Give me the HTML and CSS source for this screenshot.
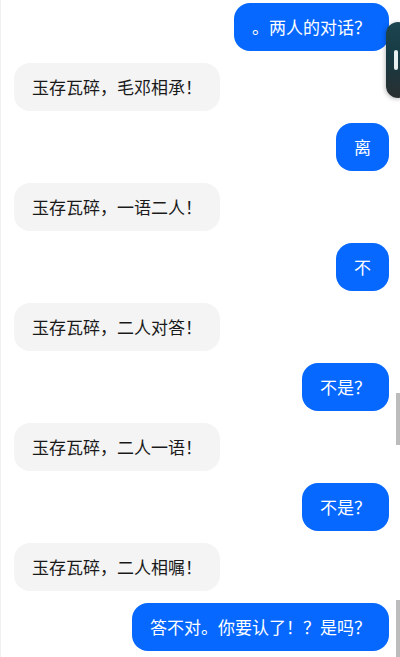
FILE: index.html
```html
<!DOCTYPE html>
<html lang="zh-CN">
<head>
<meta charset="utf-8">
<link rel="stylesheet" href="styles.css">
</head>
<body>
<div class="chat">
  <div class="msg sent">。两人的对话？</div>
  <div class="msg recv">玉存瓦碎，毛邓相承！</div>
  <div class="msg sent">离</div>
  <div class="msg recv">玉存瓦碎，一语二人！</div>
  <div class="msg sent">不</div>
  <div class="msg recv">玉存瓦碎，二人对答！</div>
  <div class="msg sent">不是？</div>
  <div class="msg recv">玉存瓦碎，二人一语！</div>
  <div class="msg sent">不是？</div>
  <div class="msg recv">玉存瓦碎，二人相嘱！</div>
  <div class="msg sent">答不对。你要认了！？是吗？</div>
</div>
<div class="edge-handle"><span class="handle-pill"></span></div>
<div class="scroll-mark mark-a"></div>
<div class="scroll-mark mark-b"></div>
</body>
</html>
```
FILE: styles.css
```css
html, body {
  margin: 0;
  padding: 0;
  background: #ffffff;
  width: 400px;
  height: 657px;
  overflow: hidden;
}
body {
  font-family: "Noto Sans CJK SC", "Noto Sans", sans-serif;
  position: relative;
  border-left: 1px solid #f0f0f0;
  box-sizing: border-box;
}
.chat {
  display: flex;
  flex-direction: column;
  gap: 12px;
  padding: 3px 11px 0 13px;
}
.msg {
  height: 48px;
  line-height: 48px;
  font-size: 17px;
  padding: 0 18px;
  border-radius: 16px;
  white-space: nowrap;
}
.sent {
  align-self: flex-end;
  background: #0668ff;
  color: #ffffff;
}
.recv {
  align-self: flex-start;
  background: #f4f4f4;
  color: #1a1a1a;
}
.edge-handle {
  position: absolute;
  left: 385px;
  top: 22px;
  width: 24px;
  height: 76px;
  border-radius: 12px;
  background: linear-gradient(180deg, #1e4650 0%, #163a44 45%, #2a2f30 100%);
  box-shadow: -1px 1px 4px rgba(0,0,0,0.25);
}
.handle-pill {
  position: absolute;
  left: 8px;
  top: 28px;
  width: 4px;
  height: 20px;
  border-radius: 2px;
  background: #e6eef0;
}
.scroll-mark {
  position: absolute;
  right: 0;
  width: 4px;
  background: #bcbcbc;
}
.mark-a {
  top: 393px;
  height: 52px;
}
.mark-b {
  top: 600px;
  height: 57px;
}
```
